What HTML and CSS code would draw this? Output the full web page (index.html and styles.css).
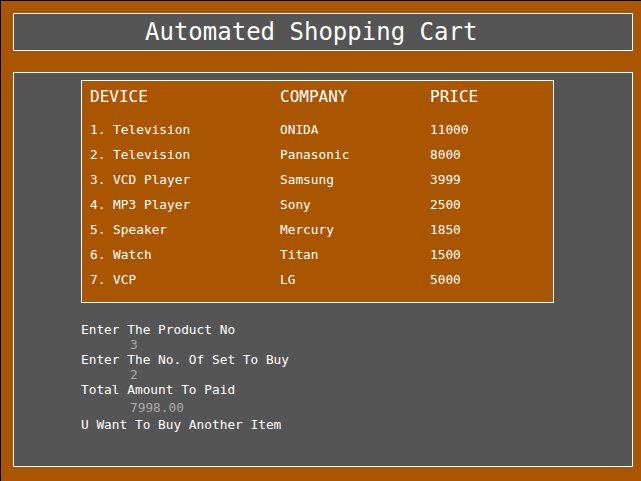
FILE: index.html
```html
<!DOCTYPE html>
<html>
<head>
<meta charset="utf-8">
<title>Automated Shopping Cart</title>
<link rel="stylesheet" href="styles.css">
</head>
<body>
<div class="screen">
  <div class="title-box">Automated Shopping Cart</div>
  <div class="main-box">
    <div class="table-box">
      <div class="row head">
        <span class="c1">DEVICE</span><span class="c2">COMPANY</span><span class="c3">PRICE</span>
      </div>
      <div class="row"><span class="c1">1. Television</span><span class="c2">ONIDA</span><span class="c3">11000</span></div>
      <div class="row"><span class="c1">2. Television</span><span class="c2">Panasonic</span><span class="c3">8000</span></div>
      <div class="row"><span class="c1">3. VCD Player</span><span class="c2">Samsung</span><span class="c3">3999</span></div>
      <div class="row"><span class="c1">4. MP3 Player</span><span class="c2">Sony</span><span class="c3">2500</span></div>
      <div class="row"><span class="c1">5. Speaker</span><span class="c2">Mercury</span><span class="c3">1850</span></div>
      <div class="row"><span class="c1">6. Watch</span><span class="c2">Titan</span><span class="c3">1500</span></div>
      <div class="row"><span class="c1">7. VCP</span><span class="c2">LG</span><span class="c3">5000</span></div>
    </div>
    <div class="console">
      <div class="line">Enter The Product No</div>
      <div class="line value">3</div>
      <div class="line">Enter The No. Of Set To Buy</div>
      <div class="line value">2</div>
      <div class="line">Total Amount To Paid</div>
      <div class="line value total">7998.00</div>
      <div class="line last">U Want To Buy Another Item</div>
    </div>
  </div>
</div>
</body>
</html>
```
FILE: styles.css
```css
html, body {
  margin: 0;
  padding: 0;
  background: #aa5500;
}
.screen {
  box-sizing: border-box;
  width: 641px;
  height: 481px;
  background: #aa5500;
  border-left: 1px solid #000;
  border-top: 1px solid #000;
  padding: 12px 8px 0 12px;
  font-family: "DejaVu Sans Mono", "Liberation Mono", monospace;
  color: #ffffff;
}
.title-box {
  box-sizing: border-box;
  width: 620px;
  height: 38px;
  border: 1px solid #ffffff;
  background: #555555;
  font-size: 24px;
  line-height: 36px;
  padding-left: 131px;
  white-space: pre;
}
.main-box {
  box-sizing: border-box;
  width: 620px;
  height: 395px;
  margin-top: 21px;
  border: 1px solid #ffffff;
  background: #555555;
  padding: 7px 0 0 67px;
}
.table-box {
  box-sizing: border-box;
  width: 473px;
  background: #aa5500;
  border: 1px solid #ffffff;
  padding: 6px 0 10px 8px;
}
.row {
  display: flex;
  font-size: 12.8px;
  line-height: 25px;
  height: 25px;
  white-space: pre;
}
.row.head {
  font-size: 16px;
  line-height: 20px;
  height: 20px;
  margin-bottom: 10px;
}
.c1 { width: 190px; }
.c2 { width: 150px; }
.c3 { flex: 1; }
.console {
  margin-top: 19px;
  font-size: 12.8px;
}
.line {
  line-height: 15px;
  height: 15px;
  white-space: pre;
}
.value {
  color: #aaaaaa;
  padding-left: 49px;
}
.total { margin-top: 3px; }
.last { margin-top: 2px; }
```
